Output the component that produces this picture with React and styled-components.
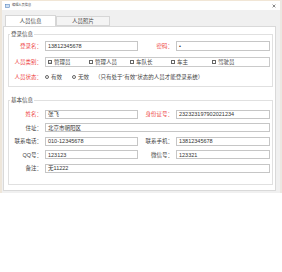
import React from 'react';
import styled, { createGlobalStyle } from 'styled-components';

const Global = createGlobalStyle`
  html, body { margin: 0; padding: 0; background: #fff; }
  body {
    font-family: "Liberation Sans", "Noto Sans CJK SC", sans-serif;
    color: #333;
  }
  * { box-sizing: border-box; }
`;

const Window = styled.div`
  width: 282px;
  height: 193px;
  background: #f0f0f0;
  border-left: 2px solid #eee6da;
  border-right: 2px solid #ece8e2;
  display: flex;
  flex-direction: column;
`;

const TitleBar = styled.div`
  height: 10px;
  background: #fff;
  border-top: 1px solid #f1e6d6;
  display: flex;
  align-items: center;
  padding: 0 4px 0 3px;
  gap: 2px;
`;

const Title = styled.span`
  font-size: 3.2px;
  line-height: 1;
  color: #444;
  flex: 1;
`;

const Body = styled.div`
  flex: 1;
  display: flex;
  flex-direction: column;
  padding: 5px 4px 2px 1px;
`;

const TabRow = styled.div`
  display: flex;
  padding-left: 2px;
  height: 11px;
`;

const Tab = styled.div`
  width: ${p => p.w}px;
  height: ${p => (p.active ? 11 : 10)}px;
  margin-top: ${p => (p.active ? 0 : 1)}px;
  margin-bottom: ${p => (p.active ? -1 : 0)}px;
  position: relative;
  z-index: ${p => (p.active ? 1 : 0)};
  background: ${p => (p.active ? '#fff' : '#f4f4f4')};
  border: 1px solid #d6d6d6;
  border-bottom: ${p => (p.active ? 'none' : '1px solid #d6d6d6')};
  font-size: 5.5px;
  display: flex;
  align-items: center;
  justify-content: center;
  color: #444;
`;

const Panel = styled.div`
  flex: 1;
  background: #fff;
  border: 1px solid #d9d9d9;
  padding: 3px 2px 0 4px;
`;

const Group = styled.fieldset`
  margin: ${p => p.top}px 0 0 0;
  padding: ${p => p.pad};
  border: 1px solid #e0e0e0;
  min-width: 0;
  display: flex;
  flex-direction: column;
  gap: ${p => p.gap}px;
`;

const Legend = styled.legend`
  font-size: 5.5px;
  line-height: 7px;
  padding: 0 1px;
  margin-left: 1px;
  color: #444;
`;

const Row = styled.div`
  display: flex;
  align-items: center;
  height: ${p => p.h}px;
`;

const Label = styled.span`
  width: ${p => p.w}px;
  flex: none;
  text-align: right;
  font-size: 5.5px;
  white-space: nowrap;
  color: ${p => (p.required ? '#ee4444' : '#444')};
  margin-right: 3px;
`;

const Input = styled.div`
  width: ${p => (p.w ? `${p.w}px` : 'auto')};
  flex: ${p => (p.w ? 'none' : '1')};
  height: 100%;
  border: 1px solid #c6c6c6;
  background: #fff;
  font-size: 5.5px;
  display: flex;
  align-items: center;
  padding-left: 2px;
  white-space: nowrap;
  overflow: hidden;
  color: #333;
`;

const Choices = styled.div`
  flex: 1;
  height: 100%;
  border: 1px solid #cacaca;
  display: flex;
  align-items: center;
  padding-left: 2px;
`;

const Choice = styled.label`
  width: ${p => p.w || 41}px;
  flex: none;
  display: flex;
  align-items: center;
  gap: 2px;
  font-size: 5.5px;
  color: #444;
  white-space: nowrap;
`;

const Box = styled.span`
  width: 4px;
  height: 4px;
  border: 0.7px solid #666;
  background: #fff;
  flex: none;
  display: flex;
`;

const Dot = styled.span`
  width: 4px;
  height: 4px;
  border-radius: 50%;
  border: 0.7px solid #666;
  background: ${p => (p.on ? 'radial-gradient(circle, #222 0 45%, #fff 50%)' : '#fff')};
  flex: none;
`;

const Note = styled.span`
  font-size: 5.5px;
  color: #444;
  white-space: nowrap;
  margin-left: 0;
`;

const Blank = styled.div`
  flex: 1;
  background: #fff;
`;

const Icon = () => (
  <svg width="5" height="4" viewBox="0 0 5 4">
    <rect x="0.3" y="0.3" width="4.4" height="3.4" fill="#cfe0f2" stroke="#4a7bb7" strokeWidth="0.5" />
  </svg>
);

const Close = () => (
  <svg width="4" height="4" viewBox="0 0 4 4">
    <path d="M0.6 0.6L3.4 3.4M3.4 0.6L0.6 3.4" stroke="#555" strokeWidth="0.7" />
  </svg>
);

const Check = () => (
  <svg width="3" height="3" viewBox="0 0 3 3">
    <path d="M0.4 1.5L1.2 2.4L2.7 0.5" stroke="#333" strokeWidth="0.5" fill="none" />
  </svg>
);

const roles = [
  { name: '管理员', checked: true },
  { name: '管理人员' },
  { name: '车队长' },
  { name: '车主' },
  { name: '驾驶员' }
];

export default function App() {
  return (
    <>
      <Global />
      <Window>
        <TitleBar>
          <Icon />
          <Title>编辑人员信息</Title>
          <Close />
        </TitleBar>
        <Body>
          <TabRow>
            <Tab active w={51}>人员信息</Tab>
            <Tab w={54}>人员照片</Tab>
          </TabRow>
          <Panel>
            <Group top={1} pad="3px 2px 4px 0" gap={5.5}>
              <Legend>登录信息</Legend>
              <Row h={10}>
                <Label required w={33}>登录名：</Label>
                <Input w={93}>13812345678</Input>
                <Label required w={35}>密码：</Label>
                <Input>•</Input>
              </Row>
              <Row h={10}>
                <Label required w={33}>人员类别：</Label>
                <Choices>
                  {roles.map(r => (
                    <Choice key={r.name}>
                      <Box>{r.checked ? <Check /> : null}</Box>
                      {r.name}
                    </Choice>
                  ))}
                </Choices>
              </Row>
              <Row h={10}>
                <Label required w={33}>人员状态：</Label>
                <Choice w={27}>
                  <Dot on />
                  有效
                </Choice>
                <Choice w={23}>
                  <Dot />
                  无效
                </Choice>
                <Note>（只有处于“有效”状态的人员才能登录系统）</Note>
              </Row>
            </Group>
            <Group top={10} pad="5.5px 2px 11px 0" gap={4.5}>
              <Legend>基本信息</Legend>
              <Row h={9}>
                <Label required w={33}>姓名：</Label>
                <Input w={93}>张飞</Input>
                <Label required w={35}>身份证号：</Label>
                <Input>232323197902021234</Input>
              </Row>
              <Row h={9}>
                <Label w={33}>住址：</Label>
                <Input>北京市朝阳区</Input>
              </Row>
              <Row h={9}>
                <Label w={33}>联系电话：</Label>
                <Input w={93}>010-12345678</Input>
                <Label w={35}>联系手机：</Label>
                <Input>13812345678</Input>
              </Row>
              <Row h={9}>
                <Label w={33}>QQ号：</Label>
                <Input w={93}>123123</Input>
                <Label w={35}>微信号：</Label>
                <Input>123321</Input>
              </Row>
              <Row h={9}>
                <Label w={33}>备注：</Label>
                <Input>无11222</Input>
              </Row>
            </Group>
          </Panel>
        </Body>
      </Window>
      <Blank />
    </>
  );
}
